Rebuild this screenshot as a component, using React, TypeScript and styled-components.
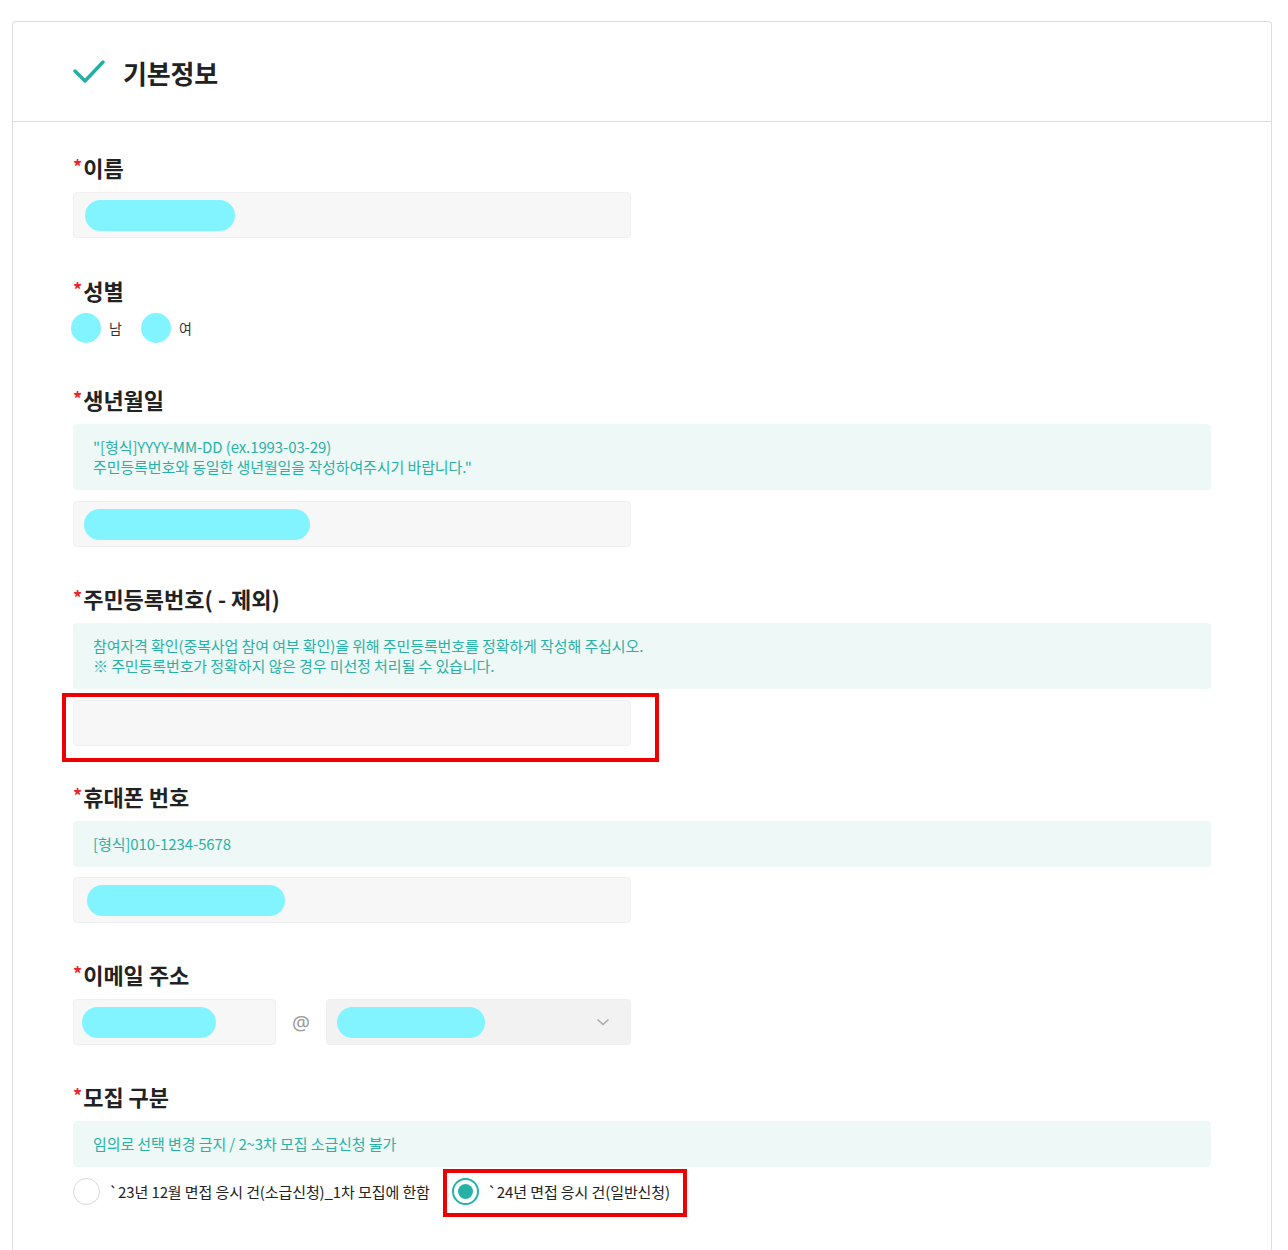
import React from "react";
import styled, { createGlobalStyle } from "styled-components";

const GlobalStyle = createGlobalStyle`
  html, body {
    margin: 0;
    padding: 0;
    background: #ffffff;
  }
  body {
    font-family: "Noto Sans CJK KR", "Noto Sans", sans-serif;
    color: #222;
  }
  * { box-sizing: border-box; }
`;

const Page = styled.div`
  padding: 21px 16px 0 12px;
`;

const Card = styled.section`
  border: 1px solid #dcdcdc;
  border-bottom: none;
  border-radius: 4px 4px 0 0;
  background: #fff;
`;

const CardHeader = styled.header`
  height: 100px;
  border-bottom: 1px solid #dcdcdc;
  display: flex;
  align-items: center;
  padding: 0 0 0 60px;
  gap: 18px;
`;

const HeaderTitle = styled.h2`
  margin: 0;
  font-size: 26px;
  font-weight: 700;
  letter-spacing: -0.2px;
  color: #222;
  line-height: 1;
  padding-top: 2px;
`;

const CardBody = styled.div`
  padding: 30px 60px 60px;
`;

const Field = styled.div<{ $gap?: number }>`
  margin-bottom: ${(p) => p.$gap ?? 36}px;
`;

const Label = styled.div`
  font-size: 22px;
  font-weight: 700;
  line-height: 30px;
  height: 30px;
  color: #222;
  margin-bottom: 10px;
`;

const Required = styled.span`
  color: #e8262b;
  font-size: 18px;
  position: relative;
  top: -3px;
  margin-right: 1px;
`;

const Notice = styled.div<{ $after?: number }>`
  background: #eef8f7;
  border-radius: 4px;
  padding: 13px 20px;
  color: #2ab1a5;
  font-size: 15px;
  line-height: 20px;
  letter-spacing: -0.1px;
  margin-bottom: ${(p) => p.$after ?? 11}px;
`;

const InputBox = styled.div<{ $width?: number; $bg?: string }>`
  width: ${(p) => p.$width ?? 558}px;
  height: 46px;
  background: ${(p) => p.$bg ?? "#f7f7f7"};
  border: 1px solid #efefef;
  border-radius: 4px;
  display: flex;
  align-items: center;
  padding: 0 10px;
  position: relative;
`;

const Redact = styled.div<{ $width: number; $offset?: number }>`
  width: ${(p) => p.$width}px;
  height: 31px;
  border-radius: 16px;
  background: #82f4ff;
  margin-left: ${(p) => p.$offset ?? 0}px;
  flex-shrink: 0;
`;

const RadioRow = styled.div`
  display: flex;
  align-items: center;
  height: 30px;
  margin-top: -2px;
`;

const RedactDot = styled.div`
  width: 30px;
  height: 30px;
  border-radius: 50%;
  background: #82f4ff;
  margin-left: -2px;
`;

const SmallText = styled.span<{ $after?: number }>`
  font-size: 14px;
  color: #333;
  margin-left: 8px;
  margin-right: ${(p) => p.$after ?? 0}px;
`;

const EmailRow = styled.div`
  display: flex;
  align-items: center;
`;

const At = styled.span`
  width: 50px;
  text-align: center;
  color: #9a9a9a;
  font-size: 20px;
  font-family: "Noto Sans", sans-serif;
`;

const Chevron = styled.svg`
  position: absolute;
  right: 20px;
  top: 17px;
`;

const OptionRow = styled.div`
  display: flex;
  align-items: center;
  margin-top: 11px;
  gap: 22px;
`;

const Option = styled.label`
  display: flex;
  align-items: center;
  gap: 9px;
  position: relative;
  font-size: 15px;
  letter-spacing: -0.1px;
  color: #222;
  line-height: 26px;
`;

const RadioCircle = styled.span<{ $checked?: boolean }>`
  width: 27px;
  height: 27px;
  border-radius: 50%;
  border: ${(p) => (p.$checked ? "2px solid #26b1a6" : "1px solid #d8d8d8")};
  background: #fff;
  display: flex;
  align-items: center;
  justify-content: center;
  flex-shrink: 0;
  &::after {
    content: "";
    display: ${(p) => (p.$checked ? "block" : "none")};
    width: 15px;
    height: 15px;
    border-radius: 50%;
    background: #26b1a6;
  }
`;

const HighlightWrap = styled.div`
  position: relative;
`;

const Highlight = styled.div<{ $l: number; $t: number; $w: number; $h: number }>`
  position: absolute;
  left: ${(p) => p.$l}px;
  top: ${(p) => p.$t}px;
  width: ${(p) => p.$w}px;
  height: ${(p) => p.$h}px;
  border: 4px solid #ec0000;
  pointer-events: none;
`;

function Req() {
  return <Required>*</Required>;
}

export default function App() {
  return (
    <>
      <GlobalStyle />
      <Page>
        <Card>
          <CardHeader>
            <svg width="32" height="26" viewBox="0 0 32 26">
              <polyline
                points="2,12 12,22 30,3"
                fill="none"
                stroke="#22b0a5"
                strokeWidth="3.4"
                strokeLinecap="round"
                strokeLinejoin="round"
              />
            </svg>
            <HeaderTitle>기본정보</HeaderTitle>
          </CardHeader>
          <CardBody>
            <Field $gap={37}>
              <Label>
                <Req />이름
              </Label>
              <InputBox>
                <Redact $width={150} $offset={1} />
              </InputBox>
            </Field>

            <Field $gap={41}>
              <Label>
                <Req />성별
              </Label>
              <RadioRow>
                <RedactDot />
                <SmallText $after={21}>남</SmallText>
                <RedactDot />
                <SmallText>여</SmallText>
              </RadioRow>
            </Field>

            <Field>
              <Label>
                <Req />생년월일
              </Label>
              <Notice>
                "[형식]YYYY-MM-DD (ex.1993-03-29)
                <br />
                주민등록번호와 동일한 생년월일을 작성하여주시기 바랍니다."
              </Notice>
              <InputBox>
                <Redact $width={226} />
              </InputBox>
            </Field>

            <Field $gap={35}>
              <Label>
                <Req />주민등록번호( - 제외)
              </Label>
              <Notice>
                참여자격 확인(중복사업 참여 여부 확인)을 위해 주민등록번호를 정확하게 작성해 주십시오.
                <br />※ 주민등록번호가 정확하지 않은 경우 미선정 처리될 수 있습니다.
              </Notice>
              <HighlightWrap>
                <InputBox />
                <Highlight $l={-11} $t={-7} $w={597} $h={69} />
              </HighlightWrap>
            </Field>

            <Field>
              <Label>
                <Req />휴대폰 번호
              </Label>
              <Notice $after={10}>[형식]010-1234-5678</Notice>
              <InputBox>
                <Redact $width={198} $offset={3} />
              </InputBox>
            </Field>

            <Field>
              <Label>
                <Req />이메일 주소
              </Label>
              <EmailRow>
                <InputBox $width={203}>
                  <Redact $width={134} $offset={-2} />
                </InputBox>
                <At>@</At>
                <InputBox $width={305} $bg="#f2f2f2">
                  <Redact $width={148} />
                  <Chevron width="14" height="10" viewBox="0 0 14 10">
                    <polyline
                      points="1.5,2.5 7,7.5 12.5,2.5"
                      fill="none"
                      stroke="#aaa"
                      strokeWidth="1.6"
                    />
                  </Chevron>
                </InputBox>
              </EmailRow>
            </Field>

            <Field>
              <Label>
                <Req />모집 구분
              </Label>
              <Notice>임의로 선택 변경 금지 / 2~3차 모집 소급신청 불가</Notice>
              <OptionRow>
                <Option>
                  <RadioCircle />
                  `23년 12월 면접 응시 건(소급신청)_1차 모집에 한함
                </Option>
                <Option>
                  <RadioCircle $checked />
                  `24년 면접 응시 건(일반신청)
                  <Highlight $l={-9} $t={-9} $w={244} $h={48} />
                </Option>
              </OptionRow>
            </Field>
          </CardBody>
        </Card>
      </Page>
    </>
  );
}
